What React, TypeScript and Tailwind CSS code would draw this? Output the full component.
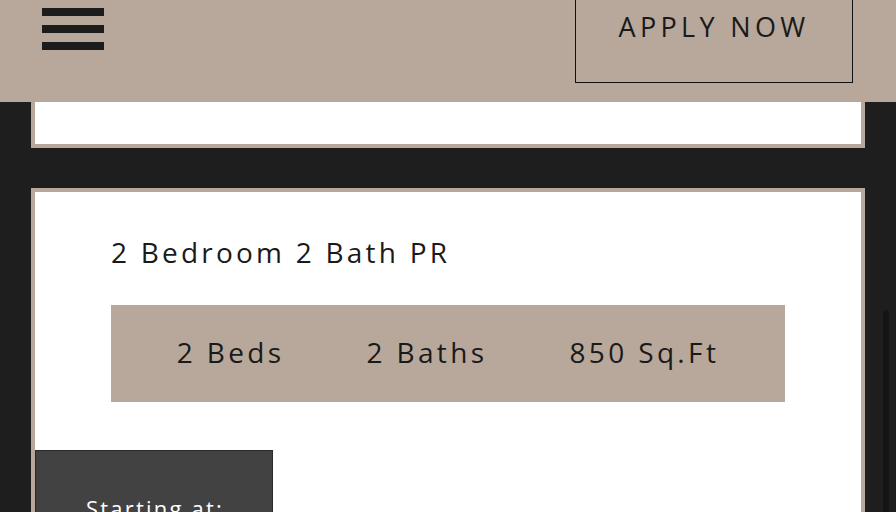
import React from "react";

const stats = ["2 Beds", "2 Baths", "850 Sq.Ft"];

export default function App() {
  return (
    <div
      className="relative h-[512px] w-[896px] overflow-hidden bg-[#1e1e1e]"
      style={{ fontFamily: '"Open Sans", "Liberation Sans", sans-serif' }}
    >
      {/* Top bar */}
      <header className="flex h-[102px] items-start justify-between bg-[#b8a89b] pl-[42px] pr-[43px]">
        <button aria-label="Menu" className="mt-[8px] flex flex-col gap-[9px]">
          <span className="block h-[8px] w-[62px] bg-[#1c1c1c]" />
          <span className="block h-[8px] w-[62px] bg-[#1c1c1c]" />
          <span className="block h-[8px] w-[62px] bg-[#1c1c1c]" />
        </button>
        <button className="-mt-[2px] flex h-[85px] w-[278px] items-start justify-center border-[1.5px] border-[#111] pt-[8px] text-[27px] tracking-[0.16em] text-[#1a1a1a]">
          APPLY NOW
        </button>
      </header>

      {/* Listing cards */}
      <main className="flex flex-col gap-[40px] pl-[31px] pr-[31px]">
        <div className="h-[46px] border-4 border-t-0 border-[#b8a89b] bg-white" />

        <section className="h-[400px] border-4 border-[#b8a89b] bg-white">
          <h2 className="ml-[76px] mt-[40px] text-[28px] leading-[40px] tracking-[0.115em] text-[#1a1a1a]">
            2 Bedroom 2 Bath PR
          </h2>
          <div className="ml-[76px] mt-[33px] flex h-[97px] w-[674px] items-center justify-center gap-[82px] bg-[#b8a89b] pb-[4px] text-[28px] tracking-[0.12em] text-[#1a1a1a]">
            {stats.map((s) => (
              <span key={s}>{s}</span>
            ))}
          </div>
          <div className="mt-[48px] h-[80px] w-[238px] border border-[#2a2a2a] bg-[#424242] pl-[50px] pt-[41px] text-[22px] tracking-[0.1em] text-white">
            Starting at:
          </div>
        </section>
      </main>

      {/* Scrollbar thumb */}
      <div className="absolute right-[7px] top-[310px] h-[220px] w-[6px] rounded-full bg-[#141414]" />
    </div>
  );
}
